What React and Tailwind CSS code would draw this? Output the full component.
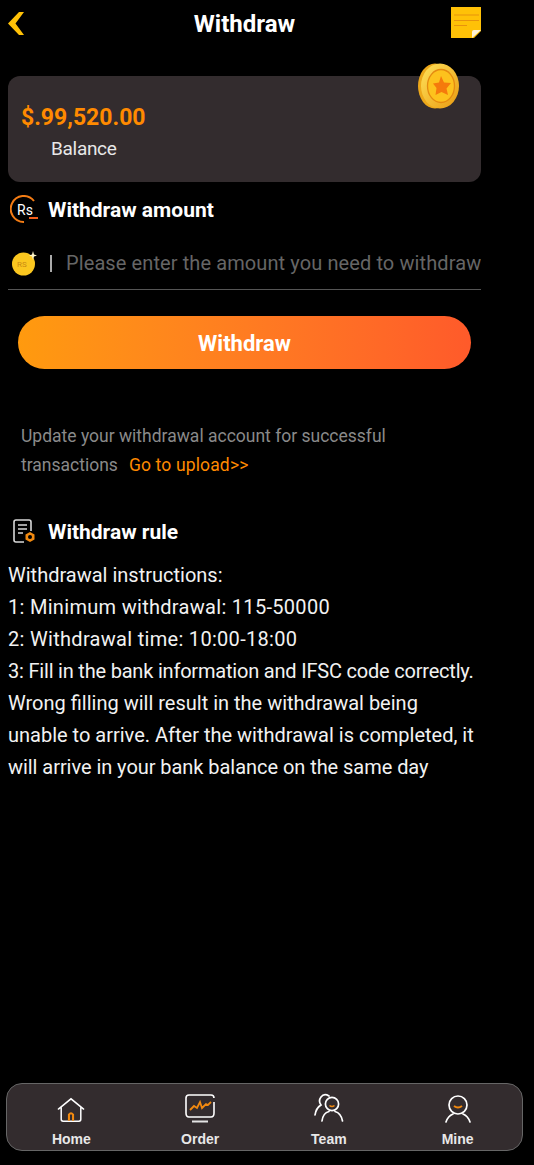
import React from 'react';

const font = "font-['Roboto',sans-serif]";

const BackIcon = () => (
    <svg width="17" height="23" viewBox="0 0 17 23">
        <path d="M11 0H16L7.5 11.5L16 23H11L0 11.5Z" fill="#ffc107" />
    </svg>
);

const NoteIcon = () => (
    <svg width="30" height="31" viewBox="0 0 30 31">
        <path d="M0 0H30V24L23 31H0Z" fill="#ffc107" />
        <path d="M3 8H28M3 13.5H28M3 18.5H16" stroke="#e8930c" strokeWidth="1.2" />
        <path d="M21 31V25Q21 23 23 23H30Z" fill="#fff3d6" />
    </svg>
);

const StarCoin = () => (
    <svg width="42" height="46" viewBox="0 0 42 46">
        <defs>
            <linearGradient id="coinEdge" x1="0" y1="0" x2="1" y2="1">
                <stop offset="0" stopColor="#ffe25a" />
                <stop offset="1" stopColor="#e99a10" />
            </linearGradient>
        </defs>
        <ellipse cx="17" cy="23" rx="17" ry="22.5" fill="#eda81a" />
        <ellipse cx="22" cy="23" rx="19" ry="22.5" fill="url(#coinEdge)" />
        <ellipse cx="23" cy="23" rx="13.5" ry="16.5" fill="#fdc21d" stroke="#e58a10" strokeWidth="1.3" />
        <path d="M23 13L26 19.5L33 20L28.5 25.5L30 32L23.5 29L17.5 32L18.5 25L15 20.5L21 19.5Z" fill="#f57a0c" />
    </svg>
);

const RsIcon = () => (
    <svg width="29" height="29" viewBox="0 0 29 29">
        <path d="M24 6A13 13 0 1 0 14 27" fill="none" stroke="#f47c14" strokeWidth="2" />
        <path d="M19 23H28" stroke="#f4601c" strokeWidth="2" />
        <text x="7" y="20" fontSize="14" fill="#fff" fontFamily="Roboto, sans-serif">Rs</text>
    </svg>
);

const RsCoin = () => (
    <svg width="26" height="26" viewBox="0 0 26 26">
        <circle cx="12.5" cy="14" r="11.5" fill="#fbc71f" />
        <path d="M22 1L23 4.500L26 5.500L23 6.500L22 10L21 6.500L18 5.500L21 4.500Z" fill="#fff6c8" />
        <text x="6" y="17" fontSize="8" fill="#c98a12" fontFamily="Roboto, sans-serif">RS</text>
    </svg>
);

const RuleIcon = () => (
    <svg width="24" height="26" viewBox="0 0 24 26">
        <path d="M11 23H3Q1 23 1 21V3Q1 1 3 1H16Q18 1 18 3V12" fill="none" stroke="#d8d8d8" strokeWidth="1.6" />
        <path d="M5 6H14M5 10H14M5 14H10" stroke="#d8d8d8" strokeWidth="1.6" />
        <path d="M17 13L21.5 15.5V20.5L17 23L12.5 20.5V15.5Z" fill="#f28a10" />
        <circle cx="17" cy="18" r="2" fill="#000" />
    </svg>
);

const HomeIcon = () => (
    <svg width="28" height="26" viewBox="0 0 30 27">
        <path d="M1.500 12.500L15 1.500L28.500 12.500M4.500 11V23.500Q4.500 25.500 6.500 25.500H23.500Q25.500 25.500 25.500 23.500V11" fill="none" stroke="#fff" strokeWidth="1.6" strokeLinecap="round" />
        <path d="M12.800 25V18.500Q15 15.500 17.200 18.500V25" fill="none" stroke="#f28a10" strokeWidth="2.2" />
    </svg>
);

const OrderIcon = () => (
    <svg width="30" height="29" viewBox="0 0 30 29">
        <path d="M26 1H4Q1 1 1 4V19Q1 23 4 23H26Q29 23 29 19V8M29 4Q29 1 26 1" fill="none" stroke="#fff" strokeWidth="1.6" />
        <path d="M7 27.500H23" stroke="#e4e4e4" strokeWidth="2" />
        <path d="M5 16L9 12L12 14L15 8L17 14L21 10L23 11L26 8" fill="none" stroke="#f28a10" strokeWidth="1.8" />
    </svg>
);

const TeamIcon = () => (
    <svg width="30" height="30" viewBox="0 0 30 30">
        <path d="M1 22Q2 15 7 12Q4 8 7 4Q10 0 15 3" fill="none" stroke="#fff" strokeWidth="1.7" strokeLinecap="round" />
        <circle cx="18" cy="11" r="6.600" fill="none" stroke="#fff" strokeWidth="1.7" />
        <path d="M8 28Q9 20 15 18.500M21 18.500Q27 20 28.500 28" fill="none" stroke="#fff" strokeWidth="1.7" strokeLinecap="round" />
        <path d="M15.500 12.500Q18 14.500 20.500 12.500" fill="none" stroke="#f28a10" strokeWidth="1.6" />
    </svg>
);

const MineIcon = () => (
    <svg width="26" height="28" viewBox="0 0 26 28">
        <circle cx="13" cy="10" r="9" fill="none" stroke="#fff" strokeWidth="1.7" />
        <path d="M1 27Q3 21 8 19M18 19Q23 21 25 27" fill="none" stroke="#fff" strokeWidth="1.7" strokeLinecap="round" />
        <path d="M9 11Q13 14 17 11" fill="none" stroke="#f28a10" strokeWidth="2" />
    </svg>
);

const navItems = [
    { label: 'Home', icon: <HomeIcon /> },
    { label: 'Order', icon: <OrderIcon /> },
    { label: 'Team', icon: <TeamIcon /> },
    { label: 'Mine', icon: <MineIcon /> },
];

export default function App() {
    return (
        <div className={`h-[1165px] w-[534px] flex flex-col overflow-hidden bg-black text-white ${font}`}>
            <div className="w-[481px] pl-2 flex-1">
                {/* header */}
                <div className="h-[47px] flex items-center">
                    <div className="w-[30px]"><BackIcon /></div>
                    <h1 className="flex-1 text-center text-[24px] font-bold">Withdraw</h1>
                    <div className="w-[30px] -mt-[2px]"><NoteIcon /></div>
                </div>

                {/* balance */}
                <div className="relative mt-[29px] h-[106px] rounded-[12px] bg-[#332c2e] pl-[13px] pt-[26px]">
                    <div className="absolute -top-[13px] right-[21px]"><StarCoin /></div>
                    <p className="text-[23px] leading-[32px] font-bold text-[#ff8a00]">$.99,520.00</p>
                    <p className="ml-[30px] text-[19px] tracking-[-0.3px] leading-[30px] text-[#e8e8e8]">Balance</p>
                </div>

                {/* amount */}
                <div className="mt-[13px] h-[29px] flex items-center gap-[9px] pl-[2px]">
                    <RsIcon />
                    <h2 className="text-[21px] leading-[28px] font-bold">Withdraw amount</h2>
                </div>
                <div className="mt-[21px] h-[45px] flex items-center border-b border-[#555] pb-[8px]">
                    <div className="ml-[3px] shrink-0"><RsCoin /></div>
                    <div className="ml-[13px] h-[17px] w-[2px] shrink-0 bg-[#aaa]" />
                    <input
                        type="text"
                        placeholder="Please enter the amount you need to withdraw"
                        className="ml-[14px] min-w-0 flex-1 bg-transparent text-[20px] tracking-[0.1px] outline-none placeholder:text-[#666]"
                    />
                </div>
                <button className="mt-[26px] ml-[10px] h-[53px] w-[453px] rounded-full bg-gradient-to-r from-[#ff9a0e] to-[#ff5a2a] pt-[2px] text-[22px] font-bold">
                    Withdraw
                </button>

                {/* upload hint */}
                <div className="mt-[53px] pl-[13px] text-[17.5px] leading-[29px] text-[#8a8a8a]">
                    <p>Update your withdrawal account for successful</p>
                    <p className="flex">
                        <span>transactions</span>
                        <span className="ml-[11px] tracking-[0.15px] text-[#ff8a00]">Go to upload&gt;&gt;</span>
                    </p>
                </div>

                {/* rules */}
                <div className="mt-[38px] flex items-center gap-[11px] pl-[5px]">
                    <RuleIcon />
                    <h2 className="text-[21px] leading-[28px] font-bold">Withdraw rule</h2>
                </div>
                <div className="mt-[13px] whitespace-nowrap text-[20px] leading-[32px] text-[#f2f2f2]">
                    <p>Withdrawal instructions:</p>
                    <p className="tracking-[0.3px]">1: Minimum withdrawal: 115-50000</p>
                    <p className="tracking-[0.3px]">2: Withdrawal time: 10:00-18:00</p>
                    <p className="tracking-[-0.2px]">3: Fill in the bank information and IFSC code correctly.</p>
                    <p>Wrong filling will result in the withdrawal being</p>
                    <p>unable to arrive. After the withdrawal is completed, it</p>
                    <p className="tracking-[-0.05px]">will arrive in your bank balance on the same day</p>
                </div>
            </div>

            {/* bottom nav */}
            <div className="ml-[6px] mb-[14px] h-[68px] w-[517px] grid grid-cols-4 rounded-[16px] border border-[#666] bg-[#332c2e]">
                {navItems.map((item) => (
                    <div key={item.label} className="flex flex-col items-center justify-end pb-[3px]">
                        {item.icon}
                        <span className="mt-[8px] font-['Liberation_Sans',sans-serif] text-[14px] leading-[16px] font-bold text-[#e8e8e8]">{item.label}</span>
                    </div>
                ))}
            </div>
        </div>
    );
}
